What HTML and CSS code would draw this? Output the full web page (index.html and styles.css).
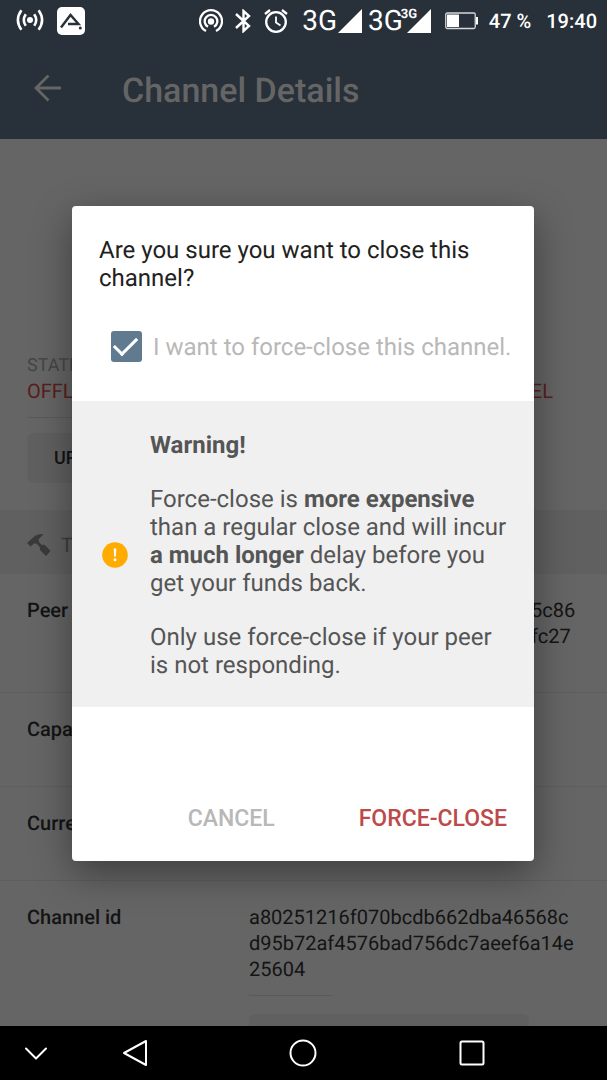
FILE: index.html
```html
<!DOCTYPE html>
<html lang="en">
<head>
<meta charset="utf-8">
<meta name="viewport" content="width=device-width, initial-scale=1">
<title>Channel Details</title>
<link rel="stylesheet" href="styles.css">
</head>
<body>
<div class="screen">
  <div class="status">
    <svg width="28" height="24" viewBox="0 0 28 24" fill="none" stroke="#fff" stroke-width="2.6"><circle cx="14" cy="11" r="3" fill="#fff" stroke="none"/><path d="M9.800 5.200Q5.800 11 9.800 16.800M18.200 5.200Q22.200 11 18.200 16.800M5.400 1.200Q-1.600 11 5.400 20.800M22.600 1.200Q29.600 11 22.600 20.800"/></svg>
    <svg class="logo" width="28" height="28" viewBox="0 0 28 28"><rect width="28" height="28" rx="5" fill="#fff"/><path d="M4 20.500 13.500 8 21.500 17H11" fill="none" stroke="#28303a" stroke-width="2.400"/><circle cx="23.300" cy="21" r="1.500" fill="#28303a"/></svg>
    <span class="spacer"></span>
    <svg width="24" height="24" viewBox="0 0 24 24" fill="none" stroke="#fff" stroke-width="2.300"><circle cx="12" cy="12.500" r="3.200" fill="#fff" stroke="none"/><path d="M7 22A11 11 0 1 1 17 22M9 17.800A6.300 6.300 0 1 1 15 17.800"/></svg>
    <svg class="bt" width="16" height="24" viewBox="0 0 16 24" fill="none" stroke="#fff" stroke-width="2.400"><path d="M1 5 14 17 8.500 22V2L14 7 1 19"/></svg>
    <svg class="alarm" width="24" height="24" viewBox="0 0 24 24" fill="none" stroke="#fff" stroke-width="2.300"><circle cx="12" cy="13" r="9.800"/><path d="M1 5 6 1M23 5 18 1" /><path d="M12 7.500V13.500L16.500 16.500" stroke-width="1.800"/></svg>
    <span class="net">3G</span>
    <svg class="signal" width="24" height="24" viewBox="0 0 24 24"><path d="M0 24 24 0V24Z" fill="#fff"/></svg>
    <span class="net second">3G</span>
    <span class="roam"><svg width="24" height="24" viewBox="0 0 24 24"><path d="M0 24 24 0V24Z" fill="#fff"/></svg><span class="mini">3G</span></span>
    <svg class="battery" width="34" height="18" viewBox="0 0 34 18"><rect x=".75" y="1" width="29.500" height="15.500" rx="1.500" fill="none" stroke="#d5d8da" stroke-width="1.300"/><path d="M2 2.500H14V15H2Z" fill="#fff"/><path d="M31 5H33V12.500H31Z" fill="#fff"/></svg>
    <span class="pct">47 %</span>
    <span class="time">19:40</span>
  </div>
  <header class="appbar">
    <button class="back" aria-label="Back"><svg width="28" height="32" viewBox="0 0 28 32" fill="none" stroke="#656565" stroke-width="2.800"><path d="M27 13H2M14.500 .5 2 13 14.500 25.500"/></svg></button>
    <h1>Channel Details</h1>
  </header>
  <main class="content">
    <section class="summary">
      <div class="state">
        <span class="caption">STATE</span>
        <div class="actions"><span>OFFL</span><span>EL</span></div>
      </div>
      <div class="divider"></div>
      <button class="update">UP</button>
    </section>
    <h2 class="section"><svg width="24" height="24" viewBox="0 0 24 24" fill="#3a3a3a"><path d="M0 10 8.500 2.500Q11.500 .8 16.500 1L11.500 6.500 12 9 14.500 11.800 17.500 11.800 23.500 18 19 23 13 17 13 14.500 9.500 10.500 7 10.500 3.500 13.500Z"/></svg>T</h2>
    <dl class="rows">
      <div class="row peer"><dt>Peer</dt><dd>5c86<br>fc27</dd></div>
      <div class="row"><dt>Capa</dt></div>
      <div class="row"><dt>Curre</dt></div>
      <div class="row last"><dt>Channel id</dt><dd>a80251216f070bcdb662dba46568c<wbr>d95b72af4576bad756dc7aeef6a14e<wbr>25604<span class="rule"></span><span class="raw"></span></dd></div>
    </dl>
  </main>
  <nav class="nav">
    <button aria-label="Hide"><svg width="24" height="28" viewBox="0 0 24 28"><path d="M2 9.500 12 19.500 22 9.500"/></svg></button>
    <button aria-label="Back"><svg width="28" height="28" viewBox="0 0 28 28"><path d="M25 2V26L3 14Z"/></svg></button>
    <button aria-label="Home"><svg width="28" height="28" viewBox="0 0 28 28"><circle cx="14" cy="14" r="12.500"/></svg></button>
    <button aria-label="Recent apps"><svg width="28" height="28" viewBox="0 0 28 28"><rect x="2.500" y="2.500" width="23" height="23" rx="1.500"/></svg></button>
  </nav>
  <div class="overlay">
    <div class="dialog" role="dialog" aria-modal="true" aria-labelledby="question">
      <p class="question" id="question">Are you sure you want to close this channel?</p>
      <label class="check"><input type="checkbox" checked><span>I want to force-close this channel.</span></label>
      <div class="warning">
        <svg width="26" height="26" viewBox="0 0 26 26"><circle cx="13" cy="13" r="12.800" fill="#ffab00"/><path d="M11.700 6.500H14.300L13.900 14.500H12.100Z" fill="#fff"/><circle cx="13" cy="17.800" r="1.500" fill="#fff"/></svg>
        <div class="message">
          <p><b>Warning!</b></p>
          <p>Force-close is <b>more expensive</b> than a regular close and will incur <b>a much longer</b> delay before you get your funds back.</p>
          <p>Only use force-close if your peer is not responding.</p>
        </div>
      </div>
      <div class="buttons"><button class="cancel">CANCEL</button><button class="force">FORCE-CLOSE</button></div>
    </div>
  </div>
</div>
</body>
</html>
```
FILE: styles.css
```css
* { box-sizing: border-box; }
body { margin: 0; font-family: Roboto, "Noto Sans", sans-serif; background: #656565; text-rendering: geometricPrecision; }
p, h1, h2, dl, dd { margin: 0; }
button { border: 0; padding: 0; background: none; font: inherit; color: inherit; }
svg { display: block; flex: none; }

.screen { position: relative; display: flex; flex-direction: column; height: 100vh; overflow: hidden; }

.status { display: flex; align-items: center; flex: none; height: 41px; padding: 0 10px 0 16px; background: #28303a; color: #fff; font-size: 20px; }
.logo { margin-left: 13px; }
.spacer { flex: 1; }
.bt { margin-left: 12px; }
.alarm { margin-left: 13px; }
.net { margin-left: 14px; font-size: 28px; font-weight: 400; line-height: 40px; }
.net.second { margin-left: 6px; }
.signal { margin-left: 1px; }
.roam { position: relative; margin-left: 4px; }
.mini { position: absolute; top: -2px; left: -6px; font-size: 13px; font-weight: 700; line-height: 16px; }
.battery { margin-left: 14px; }
.pct { margin-left: 10px; font-weight: 500; }
.time { margin-left: 15px; font-weight: 500; }

.appbar { display: flex; align-items: center; flex: none; height: 98px; padding: 2px 34px 0; gap: 60px; background: #28303a; color: #656565; }
.appbar h1 { font-size: 34px; font-weight: 500; line-height: 40px; }

.content { flex: 1; min-height: 0; overflow: hidden; color: #141414; font-size: 20px; line-height: 26px; }
.summary { padding: 215px 27px 27px; }
.state { padding-bottom: 13px; color: #5a1e1e; }
.caption { display: block; color: #454545; font-size: 18px; line-height: 24px; }
.actions { display: flex; justify-content: space-between; padding-right: 27px; }
.divider { width: 84px; height: 1px; background: #5a5a5a; }
.update { display: block; width: 50%; height: 50px; margin-top: 15px; padding-left: 27px; border-radius: 6px; background: #606060; text-align: left; font-size: 18px; font-weight: 500; }
.section { display: flex; align-items: center; gap: 10px; height: 64px; padding: 5px 27px 0; background: #606060; color: #3c3c3c; font-size: 20px; font-weight: 400; }
.row { display: flex; min-height: 94px; padding: 23px 27px 0; border-bottom: 1px solid #5e5e5e; }
.row dt { flex: 0 0 222px; font-weight: 500; }
.row.peer { min-height: 119px; }
.row.peer dt { flex-basis: 504px; }
.row.last { border: 0; }
.rule { display: block; width: 84px; height: 1px; margin: 13px 0 18px; background: #5a5a5a; }
.raw { display: block; width: 280px; height: 50px; border-radius: 6px; background: #606060; }

.nav { display: flex; justify-content: space-between; align-items: center; flex: none; height: 54px; padding: 0 121px 0 24px; background: #000; }
.nav button:first-child { margin-right: -68px; }
.nav svg { fill: none; stroke: #fff; stroke-width: 2; stroke-linejoin: round; stroke-linecap: round; }

.overlay { position: absolute; inset: 41px 0 54px; display: flex; align-items: center; padding: 0 73px 0 72px; }
.dialog { width: 100%; border-radius: 4px; background: #fff; box-shadow: 0 12px 38px rgba(0, 0, 0, .4); color: #212121; font-size: 24px; line-height: 28px; overflow: hidden; }
.question { padding: 30px 27px 0; }
.check { display: flex; align-items: center; gap: 11px; padding: 39px 20px 39px 39px; color: #b8b8b8; }
.check input { appearance: none; flex: none; width: 31px; height: 31px; margin: 0; border-radius: 3px; background: #607a8f; display: grid; place-items: center; }
.check input::before { content: ""; width: 10px; height: 20px; margin: 0 2px 6px 0; border: solid #fff; border-width: 0 3px 3px 0; transform: rotate(45deg); }
.warning { display: flex; align-items: center; gap: 22px; padding: 30px 27px 28px 30px; background: #f0f0f0; color: #555; }
.message { display: grid; gap: 26px; }
.buttons { display: flex; justify-content: flex-end; gap: 84px; padding: 98px 27px 28px; font-size: 23px; font-weight: 500; }
.cancel { color: #b8b8b8; }
.force { color: #bd4a4a; }
```
